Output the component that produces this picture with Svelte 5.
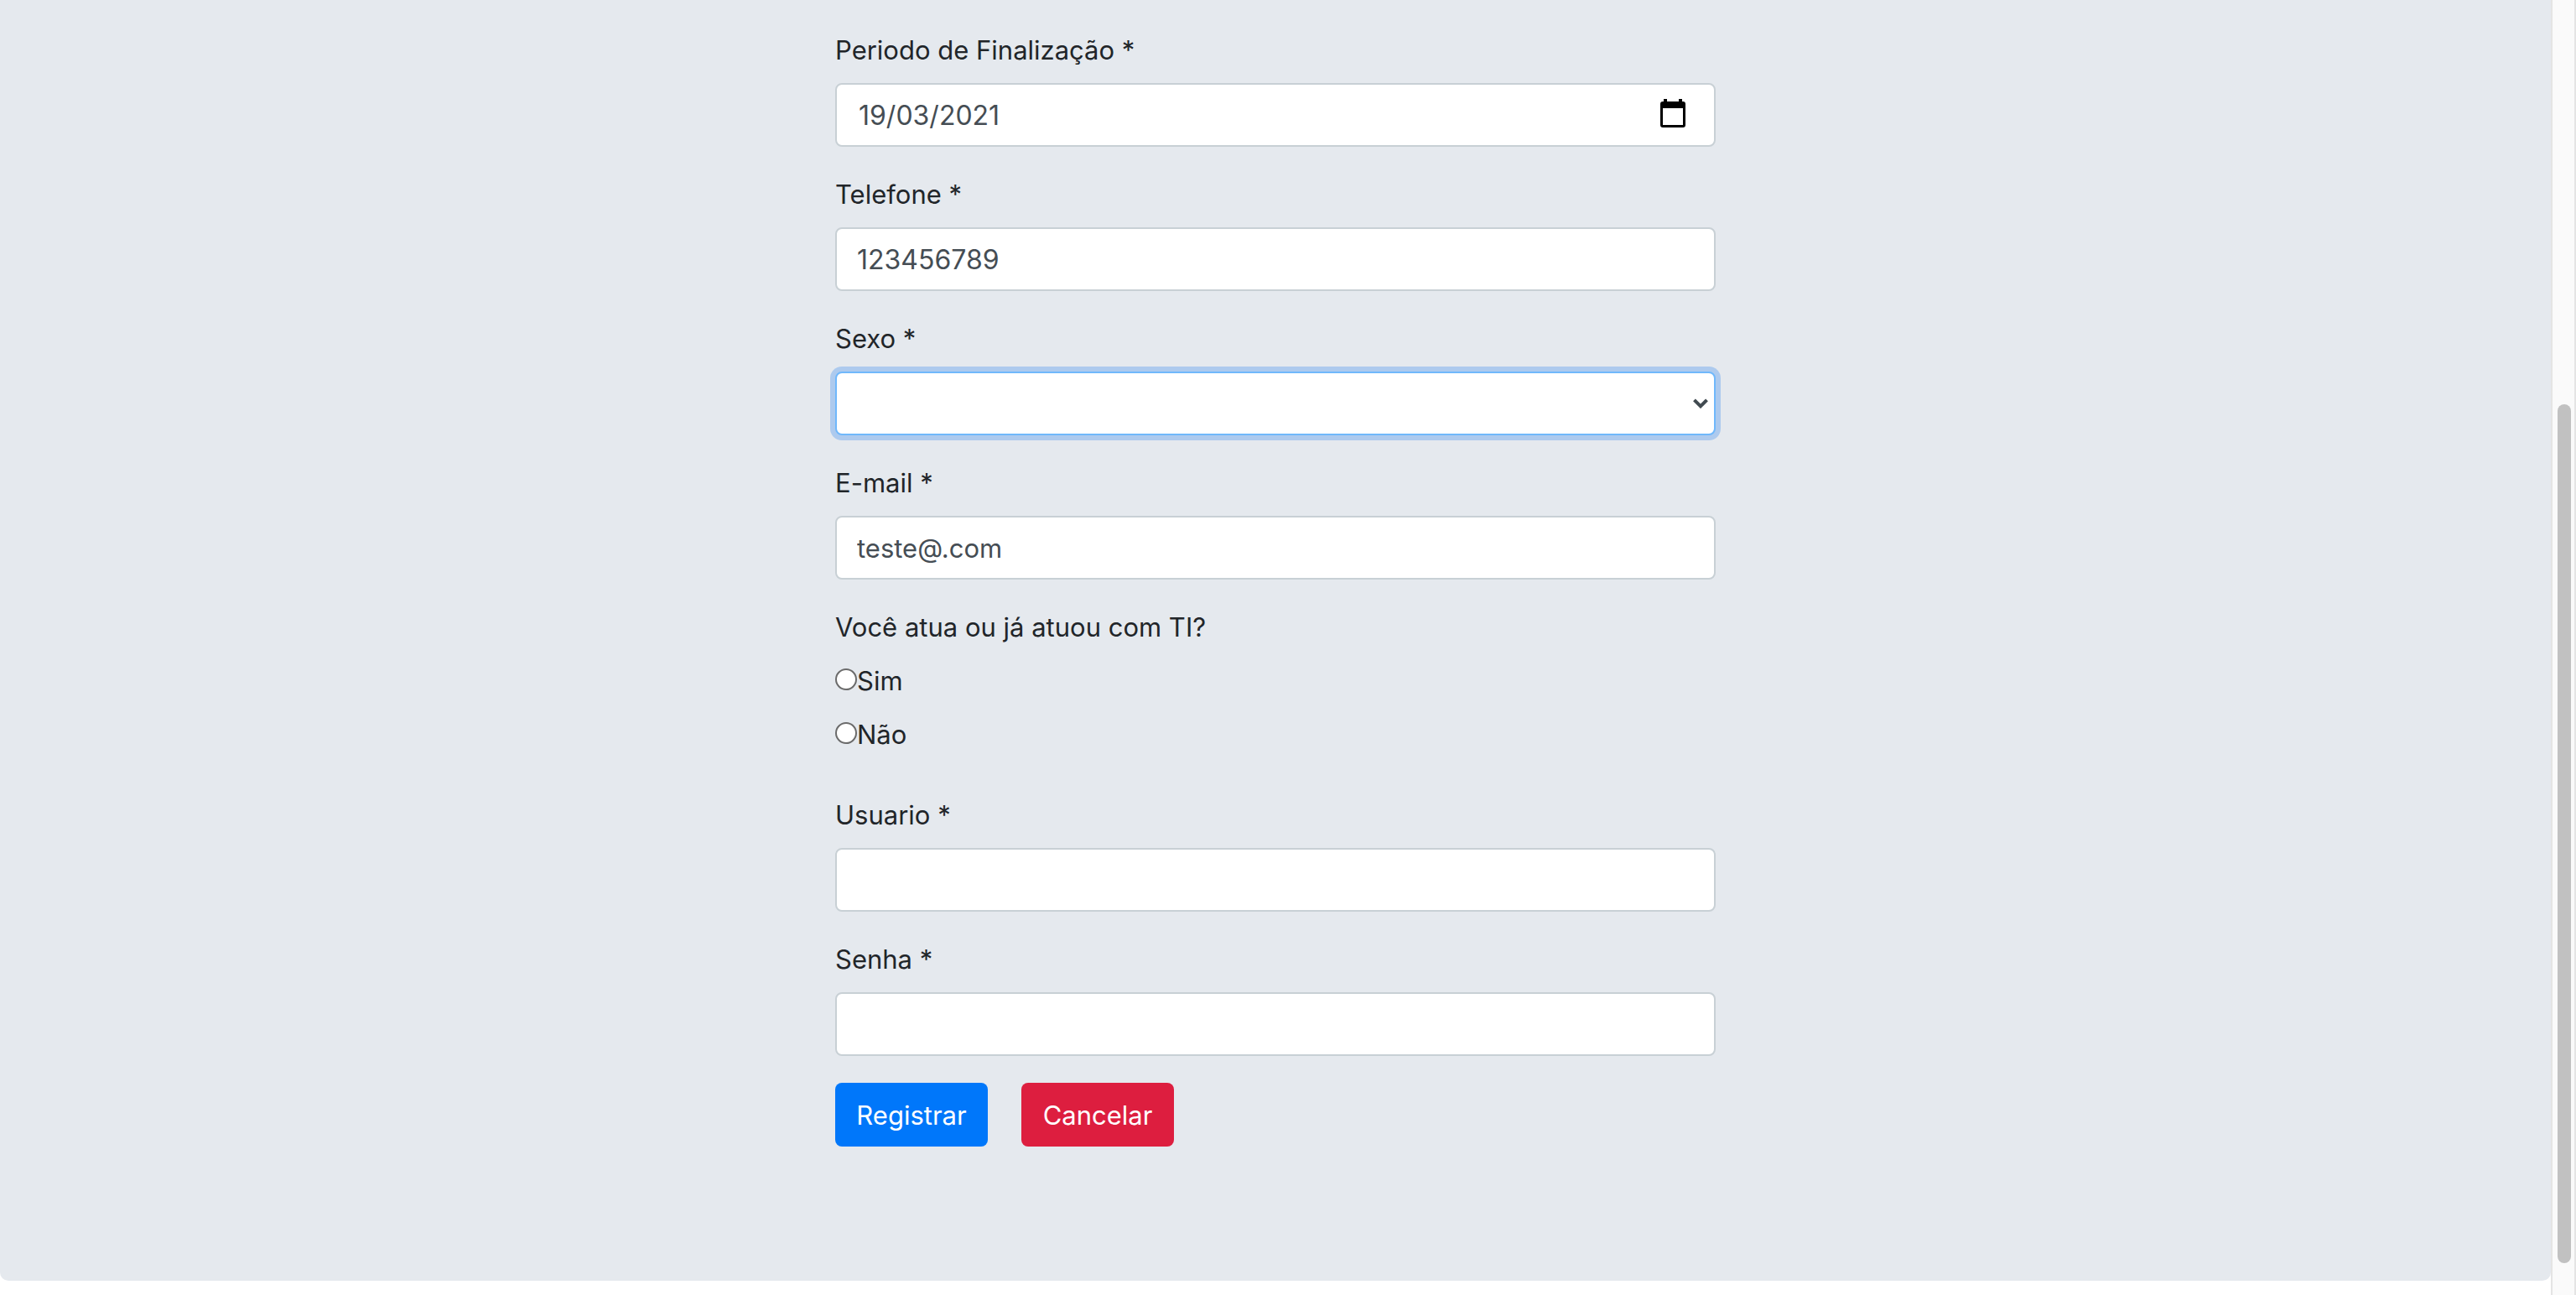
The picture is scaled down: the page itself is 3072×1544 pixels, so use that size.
<script>
  let finalizacao = $state('19/03/2021');
  let telefone = $state('123456789');
  let sexo = $state('');
  let email = $state('teste@.com');
  let atuouTi = $state(null);
  let usuario = $state('');
  let senha = $state('');
</script>

<div class="page">
  <main class="panel">
    <form class="form" onsubmit={(event) => event.preventDefault()}>
      <div class="group">
        <label for="finalizacao">Periodo de Finalização *</label>
        <div class="field">
          <input id="finalizacao" class="control numeric date" type="text" inputmode="numeric" bind:value={finalizacao} />
          <button class="calendar" type="button" aria-label="Abrir calendário">
            <svg viewBox="0 0 30 34" aria-hidden="true">
              <path
                fill="#000"
                fill-rule="evenodd"
                d="M4 0h4v3h14V0h4v3h1a3 3 0 0 1 3 3v25a3 3 0 0 1-3 3H3a3 3 0 0 1-3-3V6a3 3 0 0 1 3-3h1zM3 11v20h24V11z"
              />
            </svg>
          </button>
        </div>
      </div>

      <div class="group">
        <label for="telefone">Telefone *</label>
        <input id="telefone" class="control numeric" type="tel" bind:value={telefone} />
      </div>

      <div class="group">
        <label for="sexo">Sexo *</label>
        <div class="field">
          <select id="sexo" class="control active" bind:value={sexo}>
            <option value=""></option>
            <option value="F">Feminino</option>
            <option value="M">Masculino</option>
          </select>
          <svg class="chevron" viewBox="0 0 18 12" aria-hidden="true">
            <path d="M1.5 1.8 9 9.3l7.5-7.5" fill="none" stroke="#414a50" stroke-width="4" />
          </svg>
        </div>
      </div>

      <div class="group">
        <label for="email">E-mail *</label>
        <input id="email" class="control" type="text" inputmode="email" bind:value={email} />
      </div>

      <fieldset class="group choices">
        <legend>Você atua ou já atuou com TI?</legend>
        <label class="choice"><input type="radio" name="ti" value="sim" bind:group={atuouTi} />Sim</label>
        <label class="choice"><input type="radio" name="ti" value="nao" bind:group={atuouTi} />Não</label>
      </fieldset>

      <div class="group">
        <label for="usuario">Usuario *</label>
        <input id="usuario" class="control" type="text" bind:value={usuario} />
      </div>

      <div class="group">
        <label for="senha">Senha *</label>
        <input id="senha" class="control" type="password" bind:value={senha} />
      </div>

      <div class="actions">
        <button class="btn primary" type="submit">Registrar</button>
        <button class="btn danger" type="button">Cancelar</button>
      </div>
    </form>
  </main>

  <div class="track" aria-hidden="true">
    <div class="before"></div>
    <div class="thumb"></div>
    <div class="after"></div>
  </div>
</div>

<style>
  :global(body) {
    background: #fff;
    color: #212529;
    font-family: Inter, 'Liberation Sans', sans-serif;
    font-size: 31px;
    line-height: 50px;
  }

  .page,
  .page * {
    box-sizing: border-box;
  }

  .page {
    display: grid;
    grid-template-columns: minmax(0, 1fr) 30px;
    min-height: 100vh;
  }

  .panel {
    align-self: start;
    padding: 35px 32px 160px;
    background: #e5e9ee;
    border-radius: 0 0 10px 10px;
  }

  .form {
    display: flex;
    flex-direction: column;
    gap: 32px;
    max-width: 1050px;
    margin: 0 auto;
  }

  .group {
    display: flex;
    flex-direction: column;
    gap: 14px;
  }

  .field {
    display: grid;
    align-items: center;
  }

  .field > * {
    grid-area: 1 / 1;
  }

  .control {
    width: 100%;
    height: 76px;
    margin: 0;
    padding: 10px 24px;
    border: 2px solid #c8d0d5;
    border-radius: 8px;
    outline: none;
    background: #fff;
    color: #454d54;
    font: inherit;
    appearance: none;
  }

  .numeric {
    font-size: 32px;
  }

  .date {
    padding-left: 26px;
  }

  .active,
  .control:focus {
    border-color: #70b8fb;
    box-shadow: 0 0 0 6px #adcaee;
  }

  .calendar {
    display: flex;
    justify-self: end;
    margin: 0 36px 4px 0;
    padding: 0;
    border: 0;
    background: none;
  }

  .calendar svg {
    width: 30px;
    height: 34px;
  }

  .chevron {
    justify-self: end;
    width: 18px;
    height: 12px;
    margin-right: 9px;
    pointer-events: none;
  }

  .choices {
    min-width: 0;
    margin: 0;
    padding: 0 0 14px;
    border: 0;
  }

  legend {
    margin-bottom: 14px;
    padding: 0;
  }

  .choice {
    display: flex;
    align-items: flex-start;
  }

  .choice input {
    width: 26px;
    height: 26px;
    margin: 10px 0 0;
    border: 2px solid #6b6b6b;
    border-radius: 50%;
    background: #fff;
    appearance: none;
  }

  .choice input:checked {
    border: 8px solid #0075ff;
  }

  .actions {
    display: flex;
    gap: 40px;
  }

  .btn {
    min-width: 182px;
    height: 76px;
    padding: 14px 24px 12px;
    border: 0;
    border-radius: 8px;
    color: #fff;
    font: inherit;
    cursor: pointer;
  }

  .primary {
    background: #0077fa;
  }

  .danger {
    background: #dd1e3f;
  }

  .track {
    display: flex;
    flex-direction: column;
    align-items: flex-end;
    padding-right: 4px;
    background: #fafafa;
    border: 2px solid #e4e4e4;
    border-width: 0 2px;
  }

  .before {
    flex: 482;
  }

  .thumb {
    flex: 1024;
    width: 16px;
    border-radius: 8px;
    background: #c1c1c1;
  }

  .after {
    flex: 38;
  }
</style>
